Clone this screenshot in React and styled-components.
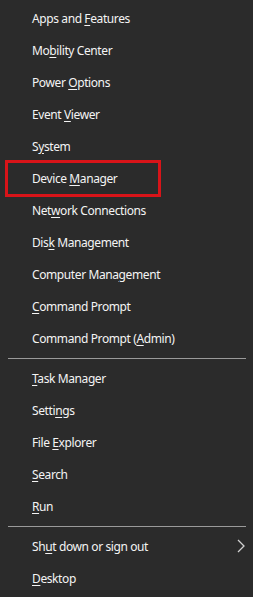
import React from "react";
import styled, { createGlobalStyle } from "styled-components";

const GlobalStyle = createGlobalStyle`
  html, body {
    margin: 0;
    padding: 0;
    background: #2b2b2b;
  }
`;

const Menu = styled.div`
  width: 253px;
  height: 597px;
  box-sizing: border-box;
  padding: 2px 0;
  background: #2b2b2b;
  font-family: "Noto Sans", "Open Sans", sans-serif;
  font-size: 12px;
  letter-spacing: -0.4px;
  color: #f4f4f4;
  display: flex;
  flex-direction: column;
`;

const Item = styled.div`
  position: relative;
  height: 32px;
  display: flex;
  align-items: center;
  padding-left: 32px;
  padding-right: 8px;

  ${(p) =>
    p.$highlighted &&
    `
    &::after {
      content: "";
      position: absolute;
      left: 5px;
      top: -2px;
      width: 156px;
      height: 37px;
      box-sizing: border-box;
      border: 3px solid #d81419;
    }
  `}
`;

const Label = styled.span`
  flex: 1;
  white-space: nowrap;
`;

const Key = styled.span`
  text-decoration: underline;
  text-underline-offset: 2px;
`;

const Separator = styled.div`
  height: 8px;
  display: flex;
  align-items: center;
  padding: 0 7px 0 8px;

  &::before {
    content: "";
    flex: 1;
    height: 1px;
    background: #9a9a9a;
  }
`;

const Chevron = styled.svg`
  width: 8px;
  height: 14px;
`;

const groups = [
  [
    ["Apps and ", "F", "eatures"],
    ["Mo", "b", "ility Center"],
    ["Power ", "O", "ptions"],
    ["Event ", "V", "iewer"],
    ["S", "y", "stem"],
    ["Device ", "M", "anager", true],
    ["Net", "w", "ork Connections"],
    ["Dis", "k", " Management"],
    ["Computer Mana", "g", "ement"],
    ["", "C", "ommand Prompt"],
    ["Command Prompt (", "A", "dmin)"],
  ],
  [
    ["", "T", "ask Manager"],
    ["Setti", "n", "gs"],
    ["File ", "E", "xplorer"],
    ["", "S", "earch"],
    ["", "R", "un"],
  ],
];

function MenuItem({ before, accel, after, highlighted, submenu }) {
  return (
    <Item $highlighted={highlighted}>
      <Label>
        {before}
        <Key>{accel}</Key>
        {after}
      </Label>
      {submenu && (
        <Chevron viewBox="0 0 8 14">
          <path d="M1 1l6 6-6 6" fill="none" stroke="#d0d0d0" strokeWidth="1.3" />
        </Chevron>
      )}
    </Item>
  );
}

export default function App() {
  return (
    <>
      <GlobalStyle />
      <Menu>
        {groups.map((group, gi) => (
          <React.Fragment key={gi}>
            {group.map(([b, k, a, h]) => (
              <MenuItem key={b + k + a} before={b} accel={k} after={a} highlighted={h} />
            ))}
            <Separator />
          </React.Fragment>
        ))}
        <MenuItem before="Sh" accel="u" after="t down or sign out" submenu />
        <MenuItem before="" accel="D" after="esktop" />
      </Menu>
    </>
  );
}
